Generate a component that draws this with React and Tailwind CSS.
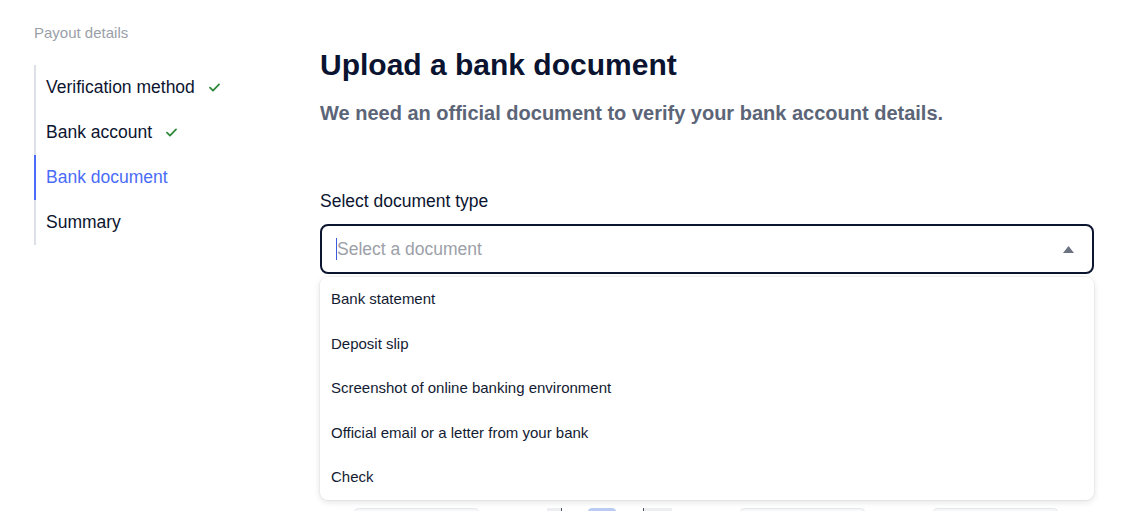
import React, { useState } from "react";

const STEPS = [
  { id: "method", label: "Verification method", done: true },
  { id: "account", label: "Bank account", done: true },
  { id: "document", label: "Bank document", active: true },
  { id: "summary", label: "Summary" },
];

const DOC_TYPES = [
  "Bank statement",
  "Deposit slip",
  "Screenshot of online banking environment",
  "Official email or a letter from your bank",
  "Check",
];

function Check() {
  return (
    <svg width="11" height="9" viewBox="0 0 11 9" fill="none" className="ml-[14px]">
      <path d="M1 4.6l3 3L10 1.4" stroke="#2f8a3c" strokeWidth="1.8" strokeLinecap="round" strokeLinejoin="round" />
    </svg>
  );
}

export default function App() {
  const [open, setOpen] = useState(true);
  const [value, setValue] = useState("");

  return (
    <div className="flex min-h-screen bg-white pl-[34px] font-['Liberation_Sans',Arial,sans-serif] text-[#0c1530]">
      {/* Sidebar */}
      <aside className="w-[286px] shrink-0 pt-[25px]">
        <div className="text-[15px] leading-4 text-[#9aa0a9]">Payout details</div>
        <ul className="mt-[24px] border-l-2 border-[#dde1e7]">
          {STEPS.map((s) => (
            <li
              key={s.id}
              className={
                "-ml-[2px] flex h-[45px] items-center border-l-2 pl-[10px] text-[17.5px] " +
                (s.active ? "border-[#4a6cf7] text-[#4a6cf7]" : "border-transparent")
              }
            >
              {s.label}
              {s.done && <Check />}
            </li>
          ))}
        </ul>
      </aside>

      {/* Main */}
      <main className="w-[774px] pt-[47px]">
        <h1 className="text-[30px] font-bold leading-[36px] text-[#0a1330]">Upload a bank document</h1>
        <p className="mt-[18px] text-[20px] font-bold leading-6 text-[#5c6577]">
          We need an official document to verify your bank account details.
        </p>

        <label className="mt-[66px] block text-[17.5px] leading-5 text-[#0c1530]">Select document type</label>
        <div className="relative mt-[13px]">
          <button
            onClick={() => setOpen(!open)}
            className="flex h-[50px] w-full items-center justify-between rounded-[8px] border-2 border-[#0c1530] pl-[14px] pr-[18px] text-left"
          >
            <span className="flex items-center text-[17.5px]">
              <span className="h-[22px] w-px bg-[#3b5bdb]" />
              <span className={value ? "text-[#0c1530]" : "text-[#9ca0a8]"}>{value || "Select a document"}</span>
            </span>
            <svg width="11" height="7" viewBox="0 0 11 7">
              <path d="M5.5 0L11 7H0z" fill="#6b7280" />
            </svg>
          </button>

          {open && (
            <ul className="absolute left-0 right-0 top-[53px] z-10 rounded-[8px] bg-white shadow-[0_2px_6px_rgba(15,23,42,0.12),0_0_0_1px_rgba(15,23,42,0.04)]">
              {DOC_TYPES.map((d) => (
                <li
                  key={d}
                  onClick={() => {
                    setValue(d);
                    setOpen(false);
                  }}
                  className="flex h-[44.5px] cursor-pointer items-center px-[11px] text-[15px] text-[#131b33] hover:bg-gray-50"
                >
                  {d}
                </li>
              ))}
            </ul>
          )}
        </div>

        {/* document examples behind the dropdown */}
        <div className="mt-[234px] flex items-start gap-[68px] pl-[34px]">
          <div className="h-10 w-[125px] rounded-t-sm border border-[#e5e7eb] bg-[#f6f7f9]" />
          <div className="flex h-10 w-[125px]">
            <div className="w-[15px] border-r border-[#4b5563] bg-[#eceef1]" />
            <div className="w-[26px]" />
            <div className="w-[28px] rounded-t-sm bg-[#b9cbf3]" />
            <div className="w-[28px] border-r border-[#4b5563]" />
            <div className="flex-1 bg-[#eceef1]" />
          </div>
          <div className="h-10 w-[125px] rounded-t-sm border border-[#e5e7eb] bg-[#f6f7f9]" />
          <div className="h-10 w-[125px] rounded-t-sm border border-[#e5e7eb] bg-[#f6f7f9]" />
        </div>
      </main>
    </div>
  );
}
